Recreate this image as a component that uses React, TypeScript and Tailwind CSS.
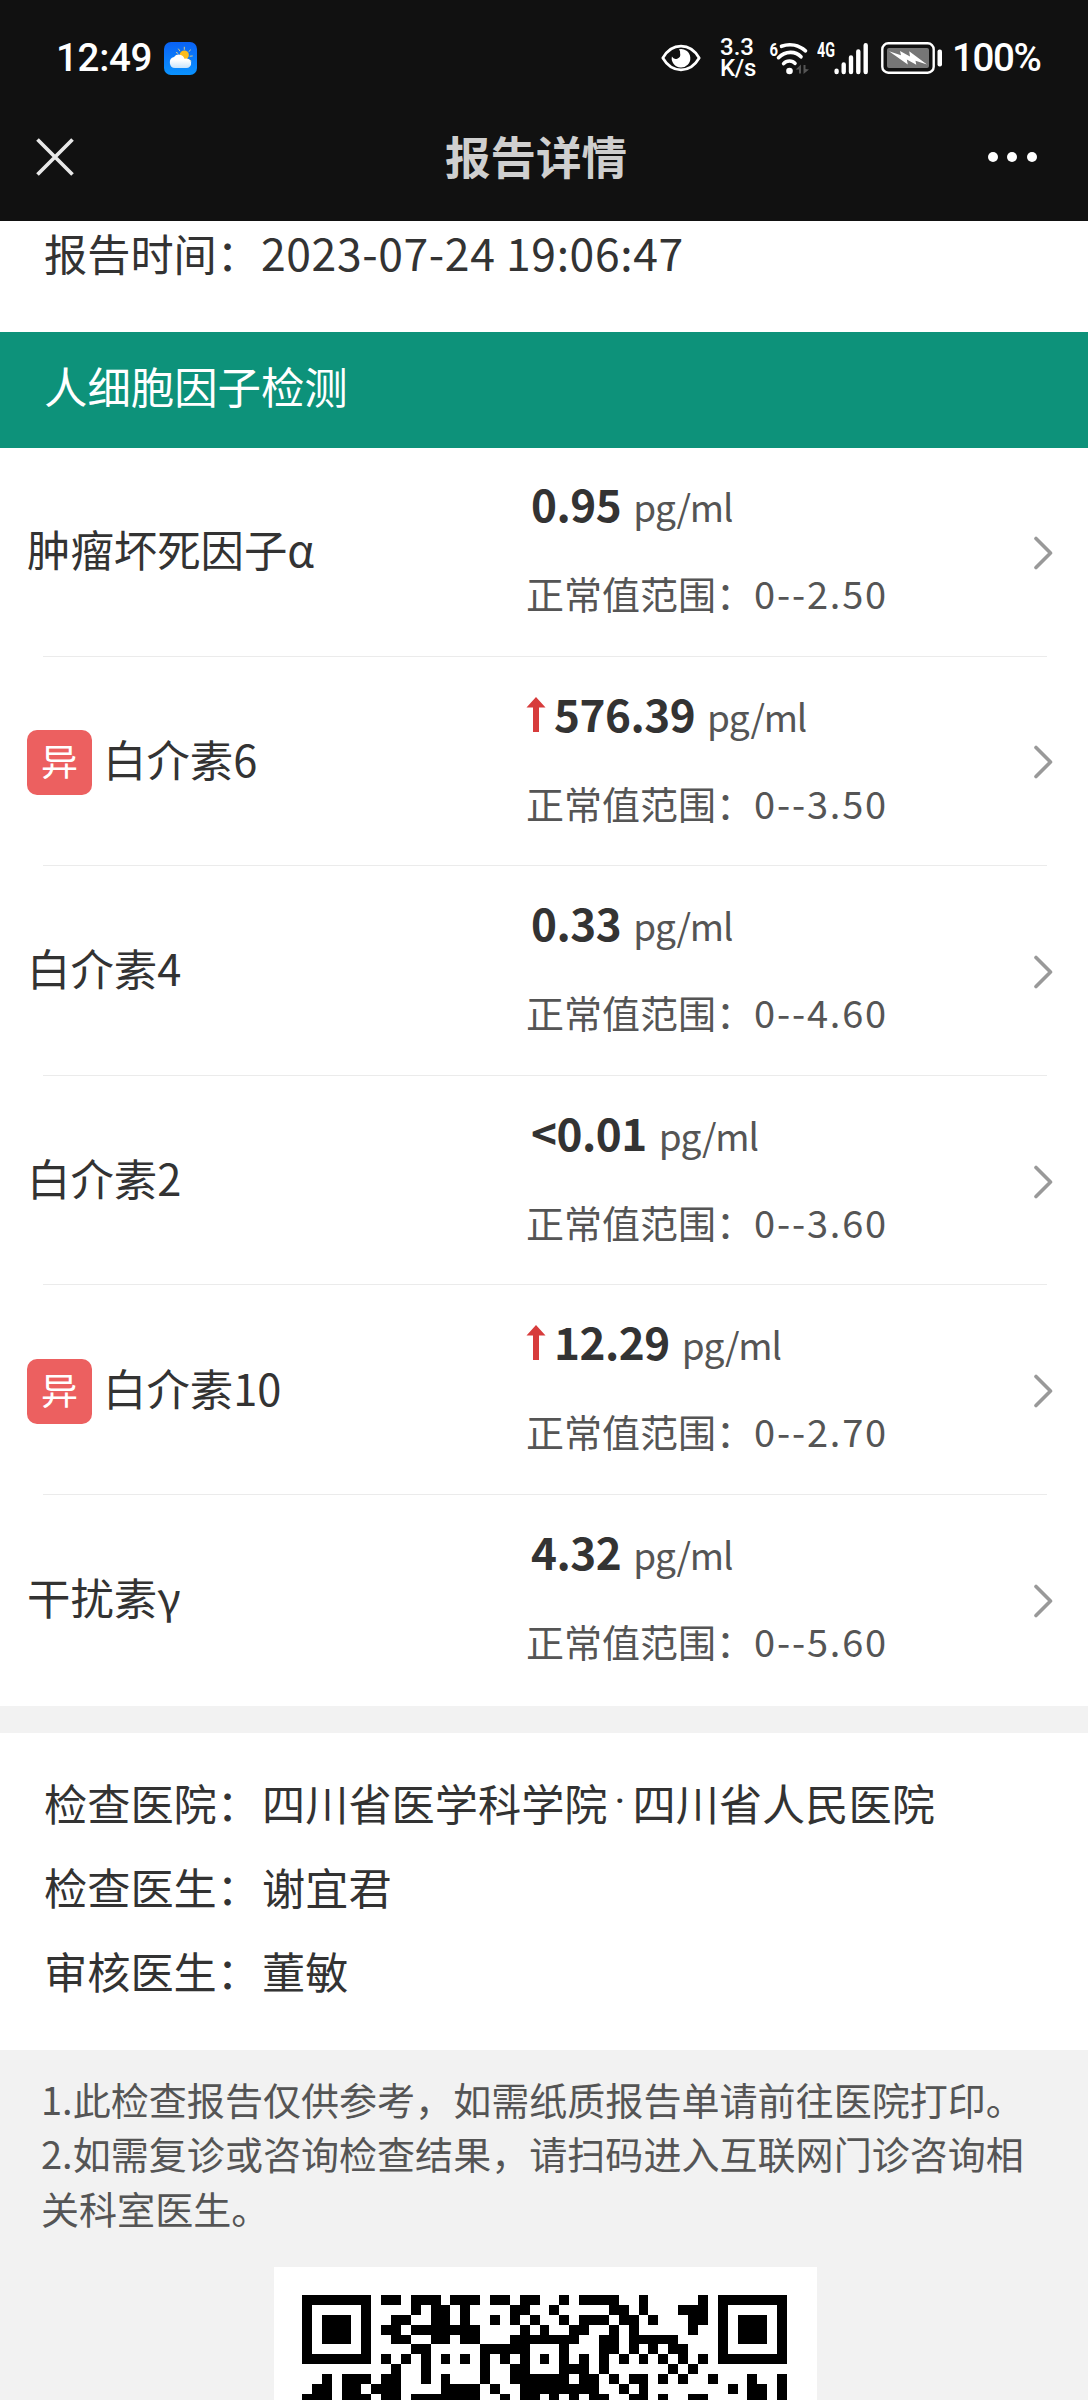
import React from 'react';

interface ResultItem {
  name: string;
  value: string;
  range: string;
  abnormal?: boolean;
}

const items: ResultItem[] = [
  { name: '肿瘤坏死因子α', value: '0.95', range: '0--2.50' },
  { name: '白介素6', value: '576.39', range: '0--3.50', abnormal: true },
  { name: '白介素4', value: '0.33', range: '0--4.60' },
  { name: '白介素2', value: '<0.01', range: '0--3.60' },
  { name: '白介素10', value: '12.29', range: '0--2.70', abnormal: true },
  { name: '干扰素γ', value: '4.32', range: '0--5.60' },
];

// first rows of the consult QR code, 49 modules wide
const qrRows = [
  '#######.##.###.###.##.##..#.####..#.....#.#######',
  '#.....#....#.##.#....##..#.....##.#...###.#.....#',
  '#.###.#..##..##.#..#.#.#..#.###.##.#...##.#.###.#',
  '#.###.#.##.#######....#.#..##..#.#.....#..#.###.#',
  '#.###.#..##..##.##...#######..##.#####....#.###.#',
  '#.....#....##.....#####...#...##.#.#.##...#.....#',
  '#######.#.#.#.#.#.#.#.#.#.#.#.#.#.#.#.#.#.#######',
  '.........#..#.....#..##...###.#......#.#.........',
  '..#.###.##..#.#...#..######.##.#.##.#.#..#...#..#',
  '.##.##.###....####.#..########..#.#........#.##.#',
  '###.###.##.#######..#.##.#.#.##..##.#..##....##.#',
];

function WeatherIcon() {
  return (
    <svg className="ml-[11px] h-[33px] w-[33px]" viewBox="0 0 33 33">
      <defs>
        <linearGradient id="sky" x1="0" y1="0" x2="0" y2="1">
          <stop offset="0" stopColor="#0a62f5" />
          <stop offset="1" stopColor="#0a93ff" />
        </linearGradient>
        <linearGradient id="cloud" x1="0" y1="0" x2="0" y2="1">
          <stop offset="0.4" stopColor="#fff" />
          <stop offset="1" stopColor="#c9e3fb" />
        </linearGradient>
      </defs>
      <rect width="33" height="33" rx="7" fill="url(#sky)" />
      <g stroke="#f3d27a" strokeWidth="0.9" strokeLinecap="round">
        <path d="M20.3 5.2v2.2M14.5 7l1.3 1.8M26.5 8l-1.6 1.5M28.3 14l-2.2.2M27 19l-1.5-1M12.3 10.5l1.5.8" />
      </g>
      <circle cx="20.3" cy="13" r="4.6" fill="#fbbc1c" />
      <path d="M11 26a5.6 5.6 0 0 1-1-11 6 6 0 0 1 10.5 1.8A4.8 4.8 0 1 1 22 26Z" fill="url(#cloud)" />
    </svg>
  );
}

function EyeIcon() {
  return (
    <svg className="h-[28px] w-[40px]" viewBox="0 0 40 28">
      <path d="M1.8 14C6 6.8 12.5 2.2 20 2.2S34 6.8 38.2 14C34 21.2 27.5 25.8 20 25.8S6 21.2 1.8 14Z" fill="none" stroke="#fff" strokeWidth="2.7" strokeLinejoin="round" />
      <path d="M18 5.2A9.3 9.3 0 1 1 10.9 12.5a4.5 4.5 0 0 0 5.3 2.2 4.5 4.5 0 0 0 2.9-5.4 5 5 0 0 0-1.100-4.1Z" fill="#fff" />
    </svg>
  );
}

function WifiIcon() {
  return (
    <svg className="ml-[15px] h-[36px] w-[42px] font-['Roboto',sans-serif]" viewBox="0 0 42 36">
      <text x="0.5" y="16.2" fill="#fff" fontSize="19" fontWeight="700" textLength="8.5" lengthAdjust="spacingAndGlyphs">6</text>
      <g fill="none" stroke="#fff" strokeWidth="3.6" strokeLinecap="round">
        <path d="M12.5 6.3C21 3.3 30 5.2 36.5 10.8" />
        <path d="M9.5 17.7C16.5 10.8 26.5 10.8 32 16.8" />
        <path d="M14.6 23.6c3-3.4 8.8-3.4 11.4-.2" />
      </g>
      <circle cx="20.5" cy="31" r="3.3" fill="#fff" />
      <path d="M26.7 29.5 32 24.5v9h-2v-4ZM40 29.5l-5.5 4.5v-9h2v4Z" fill="#555" />
    </svg>
  );
}

function SignalIcon() {
  return (
    <svg className="ml-[6px] h-[36px] w-[52px] font-['Roboto',sans-serif]" viewBox="0 0 52 36">
      <text x="0" y="17" fill="#fff" fontSize="19.5" fontWeight="700" textLength="18" lengthAdjust="spacingAndGlyphs">4G</text>
      <g stroke="#fff" strokeWidth="4.4" strokeLinecap="round">
        <path d="M19.6 30.7v1.4M26.7 24.5v7.6M34 17.5v14.6M41.3 11.5v20.6M48.7 5.2v26.9" />
      </g>
    </svg>
  );
}

function BatteryIcon() {
  return (
    <svg className="ml-[12px] h-[32px] w-[62px]" viewBox="0 0 62 32">
      <rect x="1.3" y="1.3" width="51.4" height="29.4" rx="6" fill="none" stroke="#fff" strokeWidth="2.4" />
      <rect x="6" y="6" width="42" height="20" rx="2" fill="#767676" />
      <path d="M8 9.2 20 13.2 19 9 29 14.5 28.2 9.2 46 22.4 34.5 18.8 35.3 22.8 25.8 17.4 26.8 22.5Z" fill="#fff" />
      <rect x="56.5" y="7.5" width="4.5" height="17" rx="2" fill="#fff" />
    </svg>
  );
}

function StatusBar() {
  return (
    <div className="flex h-[116px] items-center justify-between pr-[48px] pl-[56px] font-['Roboto',sans-serif] text-white">
      <div className="flex items-center">
        <span className="w-[97px] text-[38.5px] leading-[46px] font-medium tracking-[-0.3px]">12:49</span>
        <WeatherIcon />
      </div>
      <div className="flex items-center">
        <EyeIcon />
        {/* network speed */}
        <div className="ml-[19px] flex w-[34px] flex-col text-[24px] leading-[21.5px] font-medium">
          <span>3.3</span>
          <span className="tracking-[-0.3px]">K/s</span>
        </div>
        <WifiIcon />
        <SignalIcon />
        <BatteryIcon />
        <span className="ml-[9px] w-[88px] text-[38.5px] leading-[46px] font-medium tracking-[-1.4px]">100%</span>
      </div>
    </div>
  );
}

function NavBar() {
  return (
    <div className="flex h-[81px] items-center justify-between pr-[51px] pl-[36px]">
      <svg className="mr-[2px] h-[38px] w-[38px]" viewBox="0 0 38 38">
        <path d="M1.5 1.5 36.5 36.5M36.5 1.5 1.5 36.5" stroke="#e8e8e8" strokeWidth="3.7" />
      </svg>
      <h1 className="pb-[4px] pl-[8px] text-[45.5px] leading-[60px] font-bold text-[#cfcfcf]">报告详情</h1>
      <div className="flex gap-[9.5px]">
        <span className="h-[10px] w-[10px] rounded-full bg-white" />
        <span className="h-[10px] w-[10px] rounded-full bg-white" />
        <span className="h-[10px] w-[10px] rounded-full bg-white" />
      </div>
    </div>
  );
}

function ResultRow({ item, last }: { item: ResultItem; last: boolean }) {
  return (
    <div className="relative flex h-[209.6px] items-center pl-[27px]">
      <div className="flex w-[499px] items-center">
        {item.abnormal && (
          <span className="mr-[11px] flex h-[65px] w-[65px] items-center justify-center rounded-[10px] bg-[#ec6060] pb-[3px] text-[37px] leading-none text-white">异</span>
        )}
        <span className="pb-[9px] text-[43.4px] leading-[60px]">{item.name}</span>
      </div>
      <div className="flex h-full flex-1 flex-col gap-[30px] pt-[25px]">
        <div className="flex h-[60px] items-baseline leading-[60px]">
          {item.abnormal ? (
            <svg className="mr-[8px] h-[35px] w-[20px]" viewBox="0 0 20 35">
              <path d="M10 0 19.5 10.5H13V35H7V10.5H.5Z" fill="#d73c3c" />
            </svg>
          ) : (
            <span className="w-[5px]" />
          )}
          <span className="text-[44px] font-bold tracking-[-0.5px]">{item.value}</span>
          <span className="ml-[12px] text-[37px] leading-none tracking-[-1.2px] text-[#555]">pg/ml</span>
        </div>
        <div className="flex h-[60px] text-[38px] leading-[60px] text-[#555]">
          <span>正常值范围：</span>
          <span className="tracking-[1.8px]">{item.range}</span>
        </div>
      </div>
      <svg className="mr-[35px] h-[34px] w-[20px]" viewBox="0 0 20 34">
        <path d="M3 2.5 17.5 17 3 31.5" fill="none" stroke="#999" strokeWidth="3.6" strokeLinecap="round" strokeLinejoin="round" />
      </svg>
      {!last && <div className="absolute right-[41px] bottom-[1px] left-[43px] h-px bg-[#ebebeb]" />}
    </div>
  );
}

function QrCode() {
  return (
    <div className="ml-[274px] mt-[31.5px] h-[543px] w-[543px] bg-white pt-[28.3px] pl-[28.3px]">
      <svg className="h-[485px] w-[485px]" viewBox="0 0 49 49" shapeRendering="crispEdges">
        {qrRows.map((row, y) =>
          row.split('').map((cell, x) =>
            cell === '#' ? <rect key={`${x}-${y}`} x={x} y={y} width="1" height="1" fill="#000" /> : null
          )
        )}
      </svg>
    </div>
  );
}

export default function App() {
  return (
    <div className="h-[2400px] w-[1088px] overflow-hidden bg-[#f2f2f2] font-['Noto_Sans_CJK_SC',sans-serif] text-[#333]">
      <header className="h-[221px] bg-[#111]">
        <StatusBar />
        <NavBar />
      </header>

      <div className="flex h-[111px] bg-white pl-[44px] text-[43.2px] leading-[62px]">
        <span className="w-[217px]">报告时间：</span>
        <span className="text-[44.5px] tracking-[0.6px]">2023-07-24 19:06:47</span>
      </div>

      <h2 className="h-[116px] bg-[#0d927a] pl-[44px] text-[43.4px] leading-[106px] text-white">人细胞因子检测</h2>

      <div className="bg-white">
        {items.map((item, i) => (
          <ResultRow key={item.name} item={item} last={i === items.length - 1} />
        ))}
      </div>

      <div className="mt-[27.4px] h-[317px] bg-white pt-[27px] pl-[44px] text-[43.2px] leading-[84px]">
        <div className="flex">
          <span className="w-[218px]">检查医院：</span>
          <span>四川省医学科学院</span>
          <span className="w-[25px] text-center font-['Roboto',sans-serif]">·</span>
          <span>四川省人民医院</span>
        </div>
        <div className="flex">
          <span className="w-[218px]">检查医生：</span>
          <span>谢宜君</span>
        </div>
        <div className="flex">
          <span className="w-[218px]">审核医生：</span>
          <span>董敏</span>
        </div>
      </div>

      <div className="pt-[22px] pl-[41px] text-[38.05px] leading-[54.5px] whitespace-nowrap text-[#555]">
        <p>1.此检查报告仅供参考，如需纸质报告单请前往医院打印。</p>
        <p>2.如需复诊或咨询检查结果，请扫码进入互联网门诊咨询相</p>
        <p>关科室医生。</p>
      </div>

      <QrCode />
    </div>
  );
}
